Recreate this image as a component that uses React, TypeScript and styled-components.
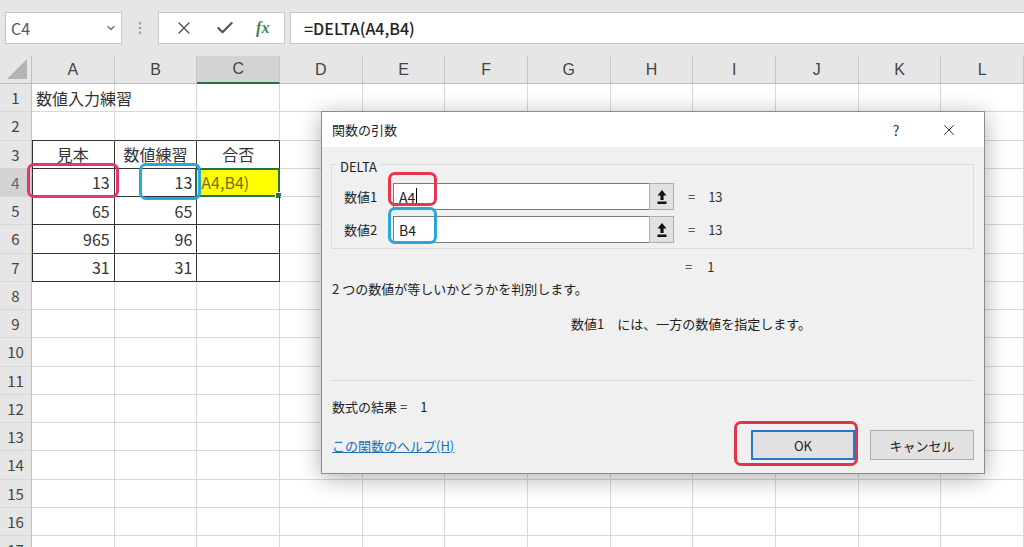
import { X, Check, ChevronDown, EllipsisVertical } from "lucide-react";
import styled, { createGlobalStyle } from "styled-components";

const GlobalStyle = createGlobalStyle`
  html, body {
    margin: 0;
    padding: 0;
    width: 1024px;
    height: 547px;
    overflow: hidden;
    background: #ffffff;
    font-family: "Noto Sans CJK JP", "Noto Sans", sans-serif;
  }
`;

const Page = styled.div`
  position: relative;
  width: 1024px;
  height: 547px;
  display: flex;
  flex-direction: column;
  overflow: hidden;
`;

const Toolbar = styled.div`
  height: 56px;
  flex: none;
  display: flex;
  align-items: center;
  background: #e6e6e6;
  padding-left: 5px;
  box-sizing: border-box;
`;

const NameBox = styled.div`
  width: 117px;
  height: 32px;
  box-sizing: border-box;
  background: #fff;
  border: 1px solid #c8c8c8;
  display: flex;
  align-items: center;
  justify-content: space-between;
  padding: 0 4px 0 5px;
  color: #555;
  font-size: 16px;
`;

const Splitter = styled.div`
  width: 36px;
  display: flex;
  justify-content: center;
  color: #a0a0a0;
`;

const FxButtons = styled.div`
  width: 127px;
  height: 32px;
  box-sizing: border-box;
  background: #fff;
  border: 1px solid #c8c8c8;
  display: flex;
  align-items: center;
  justify-content: space-around;
  padding: 0 4px;
  color: #555;
`;

const FxText = styled.span`
  font-family: "Liberation Serif", serif;
  font-style: italic;
  font-weight: bold;
  font-size: 16px;
  color: #3d8a52;
`;

const FormulaInput = styled.div`
  flex: 1;
  margin-left: 5px;
  height: 32px;
  box-sizing: border-box;
  background: #fff;
  border: 1px solid #c8c8c8;
  border-right: none;
  display: flex;
  align-items: center;
  padding-left: 13px;
  font-size: 16px;
  font-weight: 500;
  color: #222;
`;

const Sheet = styled.div`
  flex: 1;
  display: grid;
  grid-template-columns: 32px repeat(12, minmax(0, 1fr));
  grid-template-rows: 28px repeat(17, 28.25px);
  background: #fff;
`;

const Corner = styled.div`
  background: #e6e6e6;
  border-right: 1px solid #c0c0c0;
  border-bottom: 1px solid #bdbdbd;
  display: flex;
  align-items: flex-end;
  justify-content: flex-end;
  padding: 0 4px 4px 0;
`;

const ColHead = styled.div<{ $active?: boolean }>`
  background: ${(p) => (p.$active ? "#d3d3d3" : "#e6e6e6")};
  border-right: 1px solid #c6c6c6;
  border-bottom: ${(p) => (p.$active ? "2px solid #217346" : "1px solid #bdbdbd")};
  display: flex;
  align-items: center;
  justify-content: center;
  color: #444;
  font-family: "Liberation Sans Narrow", "Liberation Sans", sans-serif;
  font-size: 16px;
`;

const RowHead = styled.div<{ $active?: boolean }>`
  background: ${(p) => (p.$active ? "#d3d3d3" : "#e6e6e6")};
  border-right: 1px solid #c0c0c0;
  border-bottom: 1px solid #d6d6d6;
  display: flex;
  align-items: center;
  justify-content: center;
  color: ${(p) => (p.$active ? "#666" : "#444")};
  font-size: 15px;
`;

const Cell = styled.div<{
  $align?: string;
  $darkRight?: boolean;
  $darkBottom?: boolean;
  $darkLeft?: boolean;
  $fill?: string;
  $color?: string;
}>`
  position: relative;
  min-width: 0;
  box-sizing: border-box;
  border-right: 1px solid ${(p) => (p.$darkRight ? "#333" : "#d9d9d9")};
  border-bottom: 1px solid ${(p) => (p.$darkBottom ? "#333" : "#d9d9d9")};
  box-shadow: ${(p) => (p.$darkLeft ? "inset 1px 0 0 #333" : "none")};
  background: ${(p) => p.$fill || "transparent"};
  display: flex;
  align-items: center;
  justify-content: ${(p) => p.$align || "flex-start"};
  padding: 0 4px;
  font-size: 16px;
  color: ${(p) => p.$color || "#333"};
  white-space: nowrap;
  overflow: visible;
`;

const Selection = styled.div`
  position: absolute;
  inset: -1px -1px -1px -2px;
  border: 2px solid #217346;
  pointer-events: none;
  &::after {
    content: "";
    position: absolute;
    right: -4px;
    bottom: -4px;
    width: 5px;
    height: 5px;
    background: #217346;
    border: 1px solid #fff;
  }
`;

const Marker = styled.div<{ $color: string }>`
  position: absolute;
  border: 3px solid ${(p) => p.$color};
  border-radius: 7px;
  box-sizing: border-box;
  pointer-events: none;
`;

const Dialog = styled.div`
  position: absolute;
  left: 321px;
  top: 111px;
  width: 664px;
  height: 363px;
  box-sizing: border-box;
  border: 1px solid #8c8c8c;
  background: #f0f0f0;
  box-shadow: 0 4px 22px rgba(0, 0, 0, 0.32);
  display: flex;
  flex-direction: column;
  font-size: 13px;
  color: #222;
`;

const TitleBar = styled.div`
  height: 35px;
  flex: none;
  background: #fff;
  display: flex;
  align-items: center;
  padding-left: 10px;
  font-size: 13px;
`;

const TitleText = styled.span`
  flex: 1;
`;

const TitleButton = styled.div<{ $w: number }>`
  width: ${(p) => p.$w}px;
  display: flex;
  justify-content: center;
  align-items: center;
  color: #333;
  font-size: 14px;
`;

const Body = styled.div`
  flex: 1;
  display: flex;
  flex-direction: column;
  padding: 17px 10px 0 9px;
`;

const Group = styled.div`
  position: relative;
  height: 85px;
  box-sizing: border-box;
  border: 1px solid #dcdcdc;
  padding: 18px 0 0 12px;
  display: flex;
  flex-direction: column;
  gap: 6px;
`;

const GroupLabel = styled.span`
  position: absolute;
  top: -8px;
  left: 5px;
  padding: 0 3px;
  background: #f0f0f0;
  font-size: 13px;
  color: #222;
`;

const ArgRow = styled.div`
  display: flex;
  align-items: center;
  height: 27px;
`;

const ArgLabel = styled.span`
  width: 49px;
  font-size: 13px;
`;

const ArgInput = styled.div`
  width: 256px;
  height: 27px;
  box-sizing: border-box;
  border: 1px solid #7a7a7a;
  border-right: none;
  background: #fff;
  display: flex;
  align-items: center;
  padding-left: 5px;
  font-size: 14px;
`;

const Caret = styled.span`
  display: inline-block;
  width: 1px;
  height: 17px;
  background: #000;
  margin-left: 1px;
`;

const RefButton = styled.div`
  width: 25px;
  height: 27px;
  box-sizing: border-box;
  border: 1px solid #adadad;
  background: #e1e1e1;
  display: flex;
  align-items: center;
  justify-content: center;
`;

const ArgValue = styled.span`
  margin-left: 14px;
  font-size: 13px;
  color: #333;
  word-spacing: 10px;
`;

const ResultRow = styled.div`
  padding-left: 354px;
  margin-top: 8px;
  height: 20px;
  font-size: 13px;
  color: #333;
  word-spacing: 12px;
`;

const Desc = styled.div`
  margin-top: 2px;
  padding-left: 1px;
  font-size: 13px;
`;

const ArgDesc = styled.div`
  margin-top: 16px;
  padding-left: 240px;
  font-size: 13px;
`;

const Divider = styled.div`
  margin-top: 47px;
  border-top: 1px solid #dadada;
`;

const FormulaResult = styled.div`
  margin-top: 16px;
  padding-left: 1px;
  font-size: 13px;
`;

const Footer = styled.div`
  margin-top: 14px;
  display: flex;
  align-items: center;
`;

const HelpLink = styled.a`
  flex: 1;
  color: #1a6fb5;
  text-decoration: underline;
  font-size: 13px;
  padding-left: 1px;
`;

const Button = styled.div<{ $primary?: boolean }>`
  width: 104px;
  height: 30px;
  box-sizing: border-box;
  border: ${(p) => (p.$primary ? "2px solid #2a78c8" : "1px solid #adadad")};
  background: #e1e1e1;
  display: flex;
  align-items: center;
  justify-content: center;
  font-size: 13px;
  margin-left: ${(p) => (p.$primary ? "0" : "15px")};
`;

const cols = ["A", "B", "C", "D", "E", "F", "G", "H", "I", "J", "K", "L"];

const data: Record<string, { text: string; align?: string; color?: string }> = {
  "1-0": { text: "数値入力練習" },
  "3-0": { text: "見本", align: "center" },
  "3-1": { text: "数値練習", align: "center" },
  "3-2": { text: "合否", align: "center" },
  "4-0": { text: "13", align: "flex-end" },
  "4-1": { text: "13", align: "flex-end" },
  "4-2": { text: "A4,B4)", color: "#7d6c14" },
  "5-0": { text: "65", align: "flex-end" },
  "5-1": { text: "65", align: "flex-end" },
  "6-0": { text: "965", align: "flex-end" },
  "6-1": { text: "96", align: "flex-end" },
  "7-0": { text: "31", align: "flex-end" },
  "7-1": { text: "31", align: "flex-end" },
};

const RefIcon = () => (
  <svg width="12" height="16" viewBox="0 0 12 16">
    <path d="M6 1 L10.5 6.5 L7.6 6.5 L7.6 11 L4.4 11 L4.4 6.5 L1.5 6.5 Z" fill="#111" />
    <rect x="1.5" y="12.5" width="9" height="2.5" fill="#111" />
  </svg>
);

export default function App() {
  const rows = Array.from({ length: 17 }, (_, i) => i + 1);

  return (
    <>
      <GlobalStyle />
      <Page>
        <Toolbar>
          <NameBox>
            <span>C4</span>
            <ChevronDown size={12} color="#777" strokeWidth={3} />
          </NameBox>
          <Splitter>
            <EllipsisVertical size={16} strokeWidth={2} />
          </Splitter>
          <FxButtons>
            <X size={20} strokeWidth={1.6} color="#555" />
            <Check size={20} strokeWidth={2.6} color="#555" />
            <FxText>fx</FxText>
          </FxButtons>
          <FormulaInput>=DELTA(A4,B4)</FormulaInput>
        </Toolbar>

        <Sheet>
          <Corner>
            <svg width="20" height="20" viewBox="0 0 20 20">
              <path d="M20 0 L20 20 L0 20 Z" fill="#b4b4b4" />
            </svg>
          </Corner>
          {cols.map((c, i) => (
            <ColHead key={c} $active={i === 2}>
              {c}
            </ColHead>
          ))}
          {rows.map((r) => (
            <Row key={r} r={r} />
          ))}
        </Sheet>

        <Marker $color="#e8346d" style={{ left: 27, top: 163, width: 92, height: 35 }} />
        <Marker $color="#29a6db" style={{ left: 139, top: 163, width: 62, height: 37 }} />

        <Dialog>
          <TitleBar>
            <TitleText>関数の引数</TitleText>
            <TitleButton $w={36}>?</TitleButton>
            <TitleButton $w={70}>
              <X size={18} strokeWidth={1.3} color="#333" />
            </TitleButton>
          </TitleBar>
          <Body>
            <Group>
              <GroupLabel>DELTA</GroupLabel>
              <ArgRow>
                <ArgLabel>数値1</ArgLabel>
                <ArgInput>
                  A4
                  <Caret />
                </ArgInput>
                <RefButton>
                  <RefIcon />
                </RefButton>
                <ArgValue>= 13</ArgValue>
              </ArgRow>
              <ArgRow>
                <ArgLabel>数値2</ArgLabel>
                <ArgInput>B4</ArgInput>
                <RefButton>
                  <RefIcon />
                </RefButton>
                <ArgValue>= 13</ArgValue>
              </ArgRow>
            </Group>
            <ResultRow>= 1</ResultRow>
            <Desc>2 つの数値が等しいかどうかを判別します。</Desc>
            <ArgDesc>数値1　には、一方の数値を指定します。</ArgDesc>
            <Divider />
            <FormulaResult>数式の結果 =　1</FormulaResult>
            <Footer>
              <HelpLink>この関数のヘルプ(H)</HelpLink>
              <Button $primary>OK</Button>
              <Button>キャンセル</Button>
            </Footer>
          </Body>
        </Dialog>

        <Marker $color="#e8344f" style={{ left: 388, top: 172, width: 49, height: 34 }} />
        <Marker $color="#29a6db" style={{ left: 388, top: 207, width: 49, height: 37 }} />
        <Marker $color="#e03448" style={{ left: 734, top: 421, width: 124, height: 45 }} />
      </Page>
    </>
  );
}

function Row({ r }: { r: number }) {
  return (
    <>
      <RowHead $active={r === 4}>{r}</RowHead>
      {cols.map((c, i) => {
        const d = data[`${r}-${i}`];
        const inTable = i <= 2;
        return (
          <Cell
            key={c}
            $align={d?.align}
            $color={d?.color}
            $darkRight={inTable && r >= 3 && r <= 7}
            $darkBottom={inTable && r >= 2 && r <= 7}
            $darkLeft={i === 0 && r >= 3 && r <= 7}
            $fill={r === 4 && i === 2 ? "#ffff00" : undefined}
          >
            {d?.text}
            {r === 4 && i === 2 && <Selection />}
          </Cell>
        );
      })}
    </>
  );
}
